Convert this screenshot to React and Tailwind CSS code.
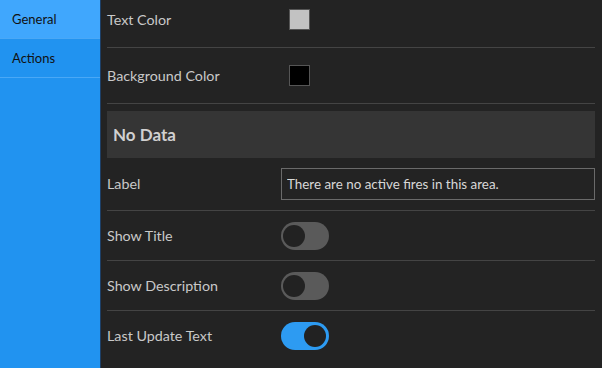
import { useState } from "react";

const Toggle = ({ on, onClick }) => (
    <button
        onClick={onClick}
        className={`relative w-[48px] h-[28px] rounded-full ${on ? "bg-[#2d9bf2]" : "bg-[#5a5a5a]"}`}
    >
        <span
            className={`absolute top-[3px] w-[22px] h-[22px] rounded-full bg-[#222] ${on ? "left-[23px]" : "left-[2px]"}`}
        />
    </button>
);

const Swatch = ({ color }) => (
    <div className="ml-2 w-[21px] h-[21px] border border-[#555]" style={{ backgroundColor: color }} />
);

const App = () => {
    const [toggles, setToggles] = useState({ title: false, desc: false, update: true });
    const [tab, setTab] = useState("General");
    const [label, setLabel] = useState("There are no active fires in this area.");

    const flip = (key) => setToggles((t) => ({ ...t, [key]: !t[key] }));

    return (
        <div
            className="flex w-[602px] h-[368px] overflow-hidden bg-[#232323] text-[14.3px] text-[#c9c9c9]"
            style={{ fontFamily: "Lato, 'Noto Sans', sans-serif" }}
        >
            {/* Sidebar */}
            <div className="w-[101px] shrink-0 bg-[#2193f0] border-r border-[#1d3f66] text-[13px]">
                {["General", "Actions"].map((name) => (
                    <div
                        key={name}
                        onClick={() => setTab(name)}
                        className={`h-[39px] pl-3 pt-[10px] text-[#111] border-b border-[#4aa8f6] cursor-pointer ${
                            tab === name ? "bg-[#40a7fd]" : ""
                        }`}
                    >
                        {name}
                    </div>
                ))}
            </div>

            {/* Settings */}
            <div className="flex-1 pl-[6px] pr-[7px]">
                <div className="flex items-center h-[48px] pb-2 border-b border-[#444]">
                    <span className="w-[174px]">Text Color</span>
                    <Swatch color="#c2c2c2" />
                </div>
                <div className="flex items-center h-[56px] border-b border-[#444]">
                    <span className="w-[174px]">Background Color</span>
                    <Swatch color="#000" />
                </div>

                <div className="mt-[7px] h-[47px] flex items-center px-[6px] bg-[#353535] text-[17px] font-bold text-[#d0d0d0]">
                    No Data
                </div>

                <div className="flex items-center h-[53px] border-b border-[#444]">
                    <span className="w-[174px]">Label</span>
                    <input
                        value={label}
                        onChange={(e) => setLabel(e.target.value)}
                        className="flex-1 h-[32px] px-[5px] bg-transparent border border-[#6a6a6a] text-[13.4px] text-[#d8d8d8] outline-none"
                    />
                </div>

                {[
                    ["title", "Show Title"],
                    ["desc", "Show Description"],
                    ["update", "Last Update Text"],
                ].map(([key, text], i) => (
                    <div
                        key={key}
                        className={`flex items-center h-[50px] ${i < 2 ? "border-b border-[#444]" : ""}`}
                    >
                        <span className="w-[174px]">{text}</span>
                        <Toggle on={toggles[key]} onClick={() => flip(key)} />
                    </div>
                ))}
            </div>
        </div>
    );
};

export default App;
